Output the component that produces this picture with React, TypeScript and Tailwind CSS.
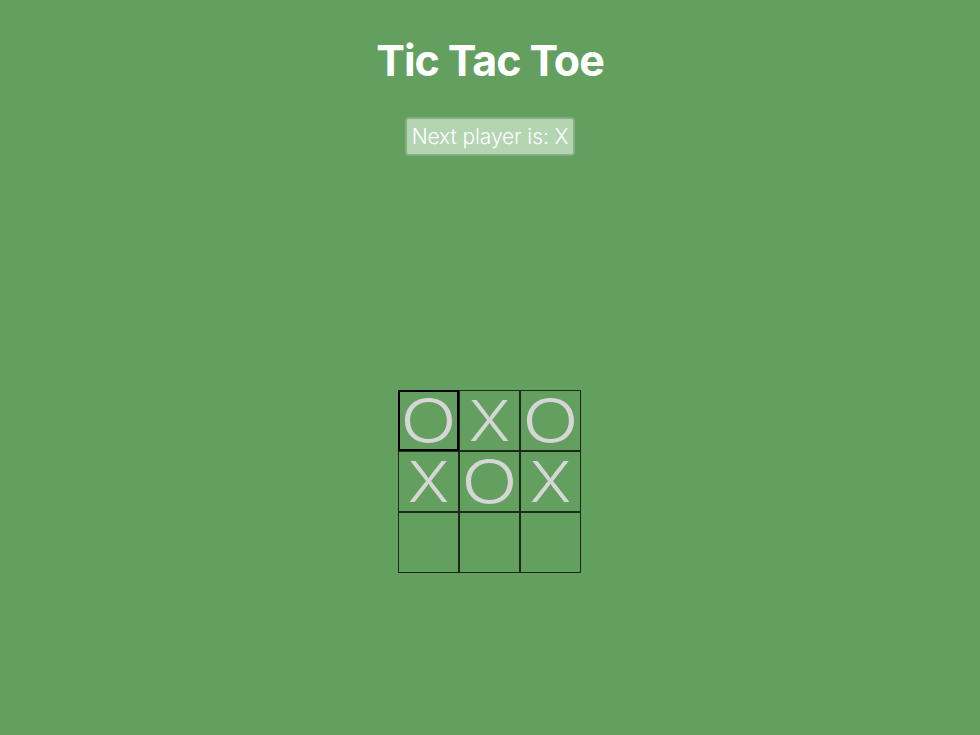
const board: (string | null)[] = ['O', 'X', 'O', 'X', 'O', 'X', null, null, null];

function Square({ value, active }: { value: string | null; active?: boolean }) {
  return (
    <button
      type="button"
      className={
        'flex h-[61px] w-[61px] items-center justify-center -ml-px -mt-px bg-transparent p-0 font-[350] text-[#d6d6d6] ' +
        (active ? 'relative z-10 border-2 border-black' : 'border border-[#1c2a1b]')
      }
    >
      {value === 'O' && <span className="inline-block scale-x-[1.2] text-[62px] leading-[48px]">O</span>}
      {value === 'X' && <span className="inline-block scale-x-[1.12] text-[56px] leading-[42px]">X</span>}
    </button>
  );
}

export default function App() {
  return (
    <main className="flex min-h-[735px] w-full flex-col items-center bg-[#639f5f] font-['Inter',sans-serif] text-white">
      <h1 className="mt-[33px] text-[43px] leading-[54px] font-bold tracking-[-0.025em]">Tic Tac Toe</h1>
      <button
        type="button"
        className="mt-[31px] h-[37px] rounded-[3px] border border-[#8fae8c] bg-[#b4d5b1] px-[5px] text-[21px] leading-none font-light tracking-[-0.005em] text-white shadow-[0_0_2px_rgba(255,255,255,0.6)]"
      >
        Next player is: X
      </button>
      <div className="mt-[235px] grid grid-cols-[repeat(3,61px)] grid-rows-[repeat(3,61px)] pl-px pt-px">
        {board.map((v, i) => (
          <Square key={i} value={v} active={i === 0} />
        ))}
      </div>
    </main>
  );
}
